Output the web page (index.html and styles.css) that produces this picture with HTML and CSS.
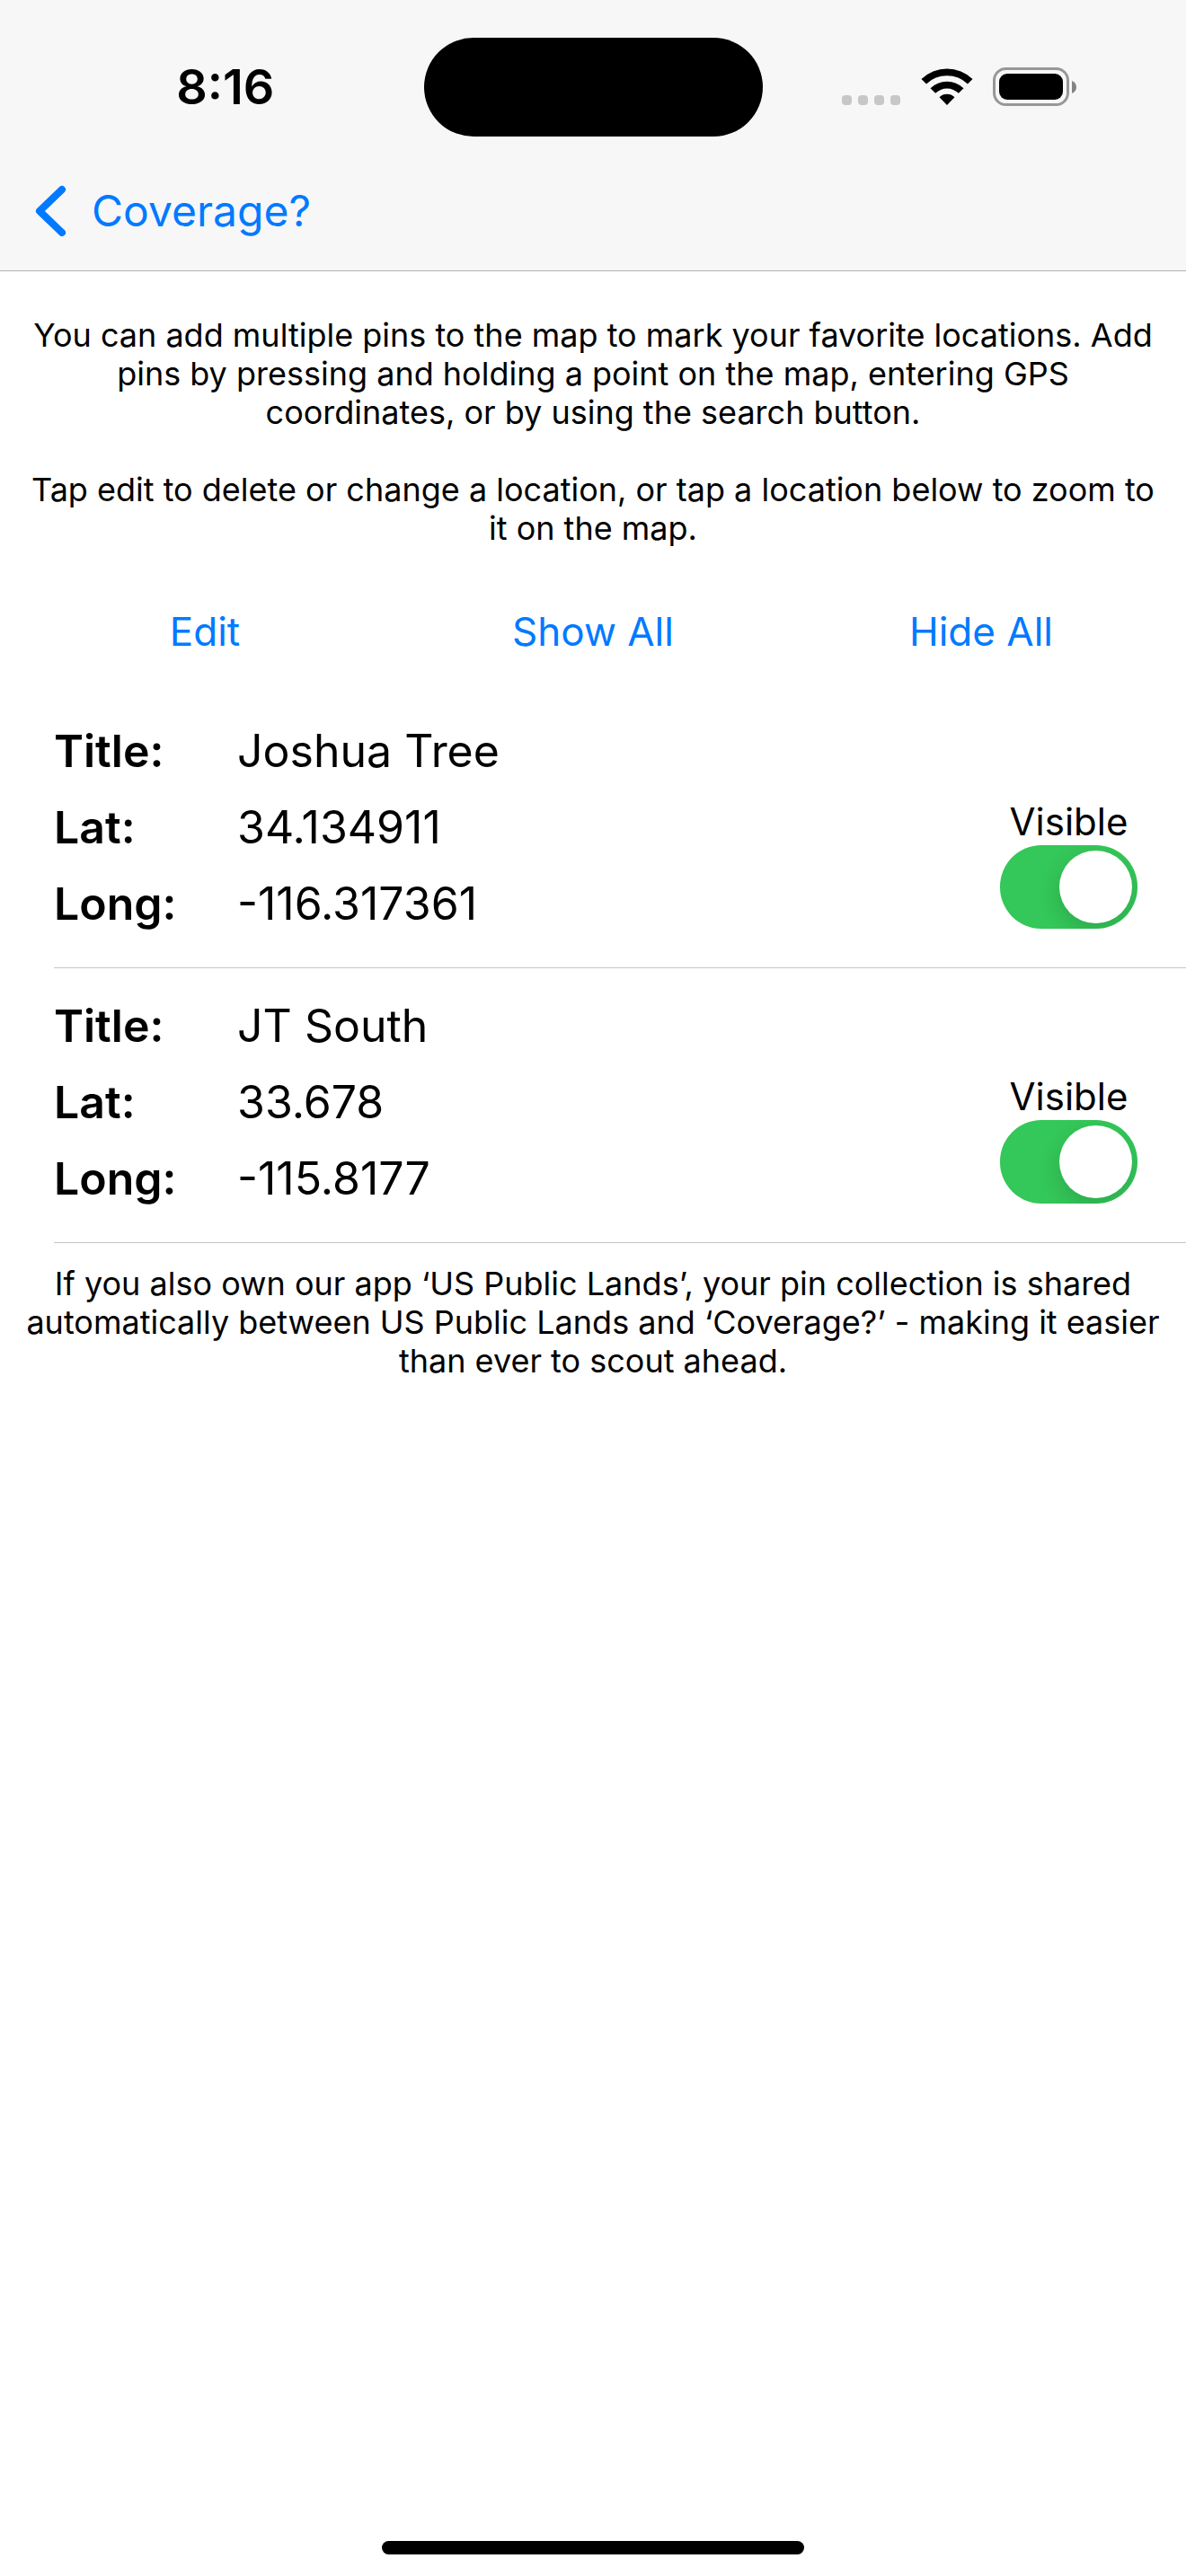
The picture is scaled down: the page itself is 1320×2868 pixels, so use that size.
FILE: index.html
```html
<!DOCTYPE html>
<html lang="en">
<head>
<meta charset="utf-8">
<meta name="viewport" content="width=device-width, initial-scale=1">
<title>Pins</title>
<link rel="stylesheet" href="styles.css">
</head>
<body>
<div class="screen">
  <header class="header">
    <div class="status">
      <time class="clock">8:16</time>
      <div class="island"></div>
      <div class="indicators">
        <svg class="signal" width="66" height="44" viewBox="0 0 66 44" aria-hidden="true">
          <g fill="#c7c7c7">
            <rect x="0" y="31" width="11" height="11" rx="4"/>
            <rect x="18" y="31" width="11" height="11" rx="4"/>
            <rect x="36" y="31" width="11" height="11" rx="4"/>
            <rect x="54" y="31" width="11" height="11" rx="4"/>
          </g>
        </svg>
        <svg class="wifi" width="58" height="44" viewBox="0 0 58 44" aria-hidden="true">
          <path d="M0.5 13 A41 41 0 0 1 57.5 13 L52 18.5 A33 33 0 0 0 6 18.5 Z"/>
          <path d="M10.5 23.2 A26.5 26.5 0 0 1 47.5 23.2 L41.9 28.8 A18.5 18.5 0 0 0 16.1 28.8 Z"/>
          <path d="M20.5 33.2 A12.3 12.3 0 0 1 37.5 33.2 L29 42 Z"/>
        </svg>
        <svg class="battery" width="94" height="44" viewBox="0 0 94 44" aria-hidden="true">
          <rect x="1.5" y="1.5" width="82" height="40" rx="13" fill="none" stroke="#979797" stroke-width="3"/>
          <rect x="7" y="7" width="71" height="29" rx="9"/>
          <path d="M88 15 Q93 17 93 22 Q93 27 88 29 Z" fill="#858585"/>
        </svg>
      </div>
    </div>
    <nav class="nav">
      <a class="back" href="#">
        <svg width="36" height="60" viewBox="0 0 36 60" fill="none" stroke="currentColor" stroke-width="8" stroke-linecap="round" stroke-linejoin="round" aria-hidden="true">
          <path d="M31 6 L6 30 L31 54"/>
        </svg>
        <span>Coverage?</span>
      </a>
    </nav>
  </header>

  <main class="content">
    <div class="note intro">
      <p>You can add multiple pins to the map to mark your favorite locations. Add pins by pressing and holding a point on the map, entering GPS coordinates, or by using the search button.</p>
      <p>Tap edit to delete or change a location, or tap a location below to zoom to it on the map.</p>
    </div>

    <div class="actions">
      <button type="button">Edit</button>
      <button type="button">Show All</button>
      <button type="button">Hide All</button>
    </div>

    <ul class="pins">
      <li class="pin">
        <dl class="fields">
          <dt>Title:</dt><dd>Joshua Tree</dd>
          <dt>Lat:</dt><dd>34.134911</dd>
          <dt>Long:</dt><dd>-116.317361</dd>
        </dl>
        <div class="visibility">
          <label for="visible-1">Visible</label>
          <input class="switch" id="visible-1" type="checkbox" role="switch" checked>
        </div>
      </li>
      <li class="pin">
        <dl class="fields">
          <dt>Title:</dt><dd>JT South</dd>
          <dt>Lat:</dt><dd>33.678</dd>
          <dt>Long:</dt><dd>-115.8177</dd>
        </dl>
        <div class="visibility">
          <label for="visible-2">Visible</label>
          <input class="switch" id="visible-2" type="checkbox" role="switch" checked>
        </div>
      </li>
    </ul>

    <div class="note">
      <p>If you also own our app ‘US Public Lands’, your pin collection is shared automatically between US Public Lands and ‘Coverage?’ - making it easier than ever to scout ahead.</p>
    </div>
  </main>

  <div class="home-bar"></div>
</div>
</body>
</html>
```
FILE: styles.css
```css
* {
  box-sizing: border-box;
}

body {
  margin: 0;
  background: #fff;
  color: #000;
  font-family: Inter, "Liberation Sans", sans-serif;
}

p, dl, dd, ul {
  margin: 0;
  padding: 0;
}

.screen {
  display: flex;
  flex-direction: column;
  min-height: 100vh;
  padding-bottom: 24px;
}

/* Status bar and navigation */
.header {
  background: #f7f7f7;
  border-bottom: 1px solid #b2b2b2;
}

.status {
  display: grid;
  grid-template-columns: 1fr 377px 1fr;
  align-items: center;
  padding-top: 42px;
}

.clock {
  padding-left: 30px;
  text-align: center;
  font-size: 54px;
  font-weight: 600;
  line-height: 64px;
}

.island {
  height: 110px;
  border-radius: 55px;
  background: #000;
}

.indicators {
  display: flex;
  justify-content: center;
  gap: 22px;
  padding-right: 32px;
}

.nav {
  padding: 49px 38px 32px;
}

.back {
  display: inline-flex;
  align-items: center;
  gap: 28px;
  color: #007aff;
  font-size: 48px;
  line-height: 68px;
  text-decoration: none;
}

/* Help text */
.note {
  padding: 24px;
  font-size: 36px;
  line-height: 43px;
  text-align: center;
}

.intro {
  display: grid;
  gap: 43px;
  padding-top: 50px;
}

/* Actions for the whole list */
.actions {
  display: grid;
  grid-template-columns: repeat(3, 1fr);
  padding: 35px 12px;
}

.actions button {
  padding: 0;
  border: 0;
  background: none;
  color: #007aff;
  font: inherit;
  font-size: 44px;
  line-height: 68px;
}

/* Saved pins */
.pins {
  padding-left: 60px;
  list-style: none;
}

.pin {
  display: flex;
  justify-content: space-between;
  align-items: flex-end;
  padding: 22px 54px 28px 0;
  border-bottom: 1px solid #c6c6c8;
}

.fields {
  display: grid;
  grid-template-columns: 204px auto;
  font-size: 50px;
  line-height: 85px;
}

.fields dt {
  font-weight: 600;
}

.visibility {
  display: flex;
  flex-direction: column;
  align-items: center;
  padding-bottom: 15px;
  font-size: 42px;
  line-height: 52px;
}

.switch {
  appearance: none;
  display: flex;
  align-items: center;
  justify-content: flex-start;
  width: 153px;
  height: 93px;
  margin: 0;
  padding: 6px;
  border-radius: 46px;
  background: #e9e9ea;
  overflow: hidden;
}

.switch::before {
  content: "";
  width: 81px;
  height: 81px;
  border-radius: 50%;
  background: #fff;
  box-shadow: 0 9px 24px rgba(0, 0, 0, 0.15);
}

.switch:checked {
  justify-content: flex-end;
  background: #34c759;
}

/* Home indicator */
.home-bar {
  width: 470px;
  height: 15px;
  margin: auto auto 0;
  border-radius: 8px;
  background: #000;
}
```
